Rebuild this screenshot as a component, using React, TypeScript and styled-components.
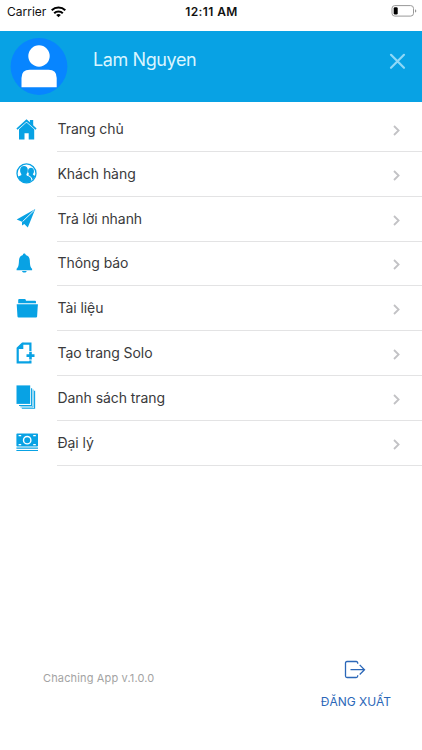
import React from 'react';
import styled, { createGlobalStyle } from 'styled-components';

const BLUE = '#08a2e4';

const GlobalStyle = createGlobalStyle`
  body { margin: 0; background: #fff; font-family: Inter, "Liberation Sans", sans-serif; }
  * { box-sizing: border-box; }
  svg { display: block; flex: none; }
`;

const Screen = styled.div`
  width: 422px;
  height: 750px;
  display: flex;
  flex-direction: column;
  overflow: hidden;
  background: #fff;
`;

const StatusBar = styled.div`
  height: 31px;
  flex: none;
  display: grid;
  grid-template-columns: 1fr auto 1fr;
  padding: 0 6px 8px 7px;
  align-items: center;
  color: #111;
`;

const Carrier = styled.div`
  display: flex;
  align-items: center;
  gap: 5px;
  font-size: 12px;
`;

const Clock = styled.div`
  font-size: 12px;
  font-weight: 600;
  letter-spacing: 0.4px;
`;

const BatterySlot = styled.div`
  display: flex;
  justify-content: flex-end;
  margin: -2px -1px 0 0;
`;

const Header = styled.header`
  height: 71px;
  flex: none;
  display: flex;
  background: ${BLUE};
  padding: 7px 16px 0 10px;
`;

const UserName = styled.h1`
  flex: 1;
  margin: 10px 0 0 25px;
  font-size: 18px;
  font-weight: 400;
  line-height: 24px;
  letter-spacing: -0.4px;
  color: #d9f5ff;
`;

const CloseButton = styled.button`
  border: 0;
  padding: 0;
  margin-top: 15px;
  width: 17px;
  height: 17px;
  background: none;
`;

const Menu = styled.nav`
  display: flex;
  flex-direction: column;
  padding-top: 5.2px;
`;

const MenuRow = styled.a`
  height: 44.8px;
  display: flex;
  align-items: center;
  padding-left: 14px;
`;

const IconSlot = styled.span`
  width: 43px;
  flex: none;
`;

const RowBody = styled.span`
  flex: 1;
  height: 100%;
  display: flex;
  align-items: center;
  justify-content: space-between;
  padding: 0 22px 0 0.5px;
  border-bottom: 1px solid #e3e3e4;
`;

const Label = styled.span`
  font-size: 14px;
  line-height: 20px;
  letter-spacing: -0.06px;
  color: #3a3a3c;
`;

const ChevronSlot = styled.span`
  padding-top: 3px;
`;

const Footer = styled.footer`
  margin-top: auto;
  height: 100px;
  display: flex;
  justify-content: space-between;
  padding: 0 31px 0 43px;
`;

const Version = styled.span`
  padding-top: 20px;
  font-size: 11px;
  line-height: 16px;
  letter-spacing: 0.15px;
  color: #a3a3a3;
`;

const Logout = styled.button`
  border: 0;
  padding: 10px 0 0;
  background: none;
  display: flex;
  flex-direction: column;
  align-items: center;
  gap: 13px;
  font: 400 12px/18px Inter, sans-serif;
  color: #2b67b8;
  white-space: nowrap;
`;

const LogoutIcon = styled.svg`
  margin-right: 2px;
`;

const Icon = ({ children }: { children: React.ReactNode }) => (
  <svg width="24" height="28" viewBox="0 0 24 28" fill={BLUE}>{children}</svg>
);

const HomeIcon = () => (
  <Icon>
    <path d="M2.4 12.6 12.5 3.200l3.400 3.100V4.100h3.300v5.200l3.400 3.300-1.100 1.200-9-8-9 8z" />
    <path d="M5 13.300 12.500 6.400l7.700 6.900v10.200h-5.500v-6.200h-4.200v6.200H5z" />
  </Icon>
);

const CustomersIcon = () => (
  <Icon>
    <circle cx="12.500" cy="13.400" r="9.500" fill="#fff" stroke={BLUE} strokeWidth="1.300" />
    <path d="M3.900 16.800c.8-.9 2.500-.9 3.300-1.500.5-.5.1-1.100-.2-1.700-.7-1.100-1-2.300-.9-3.700.2-2.800 1.700-4 3.900-4s3.700 1.300 3.800 4c.1 1.500-.2 2.700-1 3.700-.4.6-.5 1.400 0 1.800 1 .7 3 .9 3.700 2.200.7 1 .9 2.300.9 3.500a8.900 8.900 0 0 1-13.500-4.300z" />
    <path d="M13.900 15.100c.7-.5 1.300-.7 1.100-1.300-.8-.9-1.100-2.100-.9-3.400.2-1.700 1.400-2.700 2.900-2.700s2.700 1 2.900 2.700c.2 1.400-.1 2.500-.9 3.400-.3.600.1 1.100.8 1.400l1.600.8a9 9 0 0 1-2.900 4c-.1-2.300-2.200-3.900-4.600-4.900z" />
  </Icon>
);

const SendIcon = () => (
  <Icon>
    <path d="M21.300 3.900 2.700 14.400l5.300 2.300v3.700l2.300-1.500 3.500 3.500z" />
    <path d="M20.200 5.300 8.500 16.600" fill="none" stroke="#fff" strokeWidth=".9" />
  </Icon>
);

const BellIcon = () => (
  <Icon>
    <path d="M10.300 3.500c.9 0 1.400.6 1.400 1.400 2.500.6 4 2.600 4.100 5.300.2 5 .6 7.200 2.300 8.600v1.400H2.600v-1.400C4.300 17.400 4.800 15.200 5 10.200c.1-2.700 1.500-4.700 3.900-5.300 0-.8.5-1.400 1.400-1.400zM8 20.900h4.700c-.3 1.100-1.100 1.700-2.300 1.700S8.300 22 8 20.900z" />
  </Icon>
);

const FolderIcon = () => (
  <Icon>
    <path d="M4.200 8.300V5.100q0-1 1-1h5.600q.8 0 1 .9l.2.700h9q1 0 1 1v1.600z" />
    <path d="M2.700 9.200h21.200l-.8 12.300q-.1 1-1.100 1H4.600q-1 0-1.100-1z" />
  </Icon>
);

const NewPageIcon = () => (
  <Icon>
    <path d="M16.400 11V3.600H8.500L3.700 8.200v14.100h12.700v-1.800" fill="none" stroke={BLUE} strokeWidth="2.200" />
    <path d="m2.600 8.900 6.700-6.400v6.400z" />
    <path d="M15.200 11.700h2.600v2.600h2.700v2.600h-2.700v2.600h-2.600v-2.600h-2.700v-2.600h2.700z" />
  </Icon>
);

const PagesIcon = () => (
  <Icon>
    <path d="M2.500 1.400h13.700v18.500H2.500z" />
    <path d="M17.600 4.300v17.200H5M20.600 6.800v17.500H7.800" fill="none" stroke={BLUE} strokeWidth="1.100" />
    <path d="M19.100 5.500v17.400H6.300" fill="none" stroke={BLUE} strokeWidth=".7" />
  </Icon>
);

const MoneyIcon = () => (
  <Icon>
    <path d="M3.200 4.500h20q.8 0 .8.800v11.500q0 .8-.8.800h-20q-.8 0-.8-.8V5.300q0-.8.800-.8zM2.400 18.600H24v1.100H2.400zM2.400 20.900H24v1.200H2.400z" />
    <circle cx="13.200" cy="11.200" r="3.700" fill="none" stroke="#fff" strokeWidth="1.400" />
    <path d="M4.600 6.600h2.600M19.200 6.600h2.600M4.600 15.700h2.600M19.200 15.700h2.600" fill="none" stroke="#fff" strokeWidth="1.300" />
  </Icon>
);

const items = [
  { label: 'Trang chủ', icon: HomeIcon },
  { label: 'Khách hàng', icon: CustomersIcon },
  { label: 'Trả lời nhanh', icon: SendIcon },
  { label: 'Thông báo', icon: BellIcon },
  { label: 'Tài liệu', icon: FolderIcon },
  { label: 'Tạo trang Solo', icon: NewPageIcon },
  { label: 'Danh sách trang', icon: PagesIcon },
  { label: 'Đại lý', icon: MoneyIcon },
];

export default function App() {
  return (
    <Screen>
      <GlobalStyle />
      <StatusBar>
        <Carrier>
          Carrier
          <svg width="15" height="12" viewBox="0 0 15 12" fill="none" stroke="#000" strokeWidth="2.100">
            <path d="M.7 4.300a9.800 9.800 0 0 1 13.600 0M3.200 7.200a6.200 6.200 0 0 1 8.600 0" />
            <path d="M7.500 11.300 5.200 9a3.300 3.300 0 0 1 4.600 0z" fill="#000" stroke="none" />
          </svg>
        </Carrier>
        <Clock>12:11 AM</Clock>
        <BatterySlot>
          <svg width="26" height="12" viewBox="0 0 26 12">
            <rect x="1" y=".6" width="21.500" height="10.500" rx="2.800" fill="none" stroke="#999" />
            <rect x="2.700" y="2.300" width="4" height="7.200" rx="1.200" fill="#000" />
            <path d="M24 4.200q1.300.5 1.300 1.700T24 7.600z" fill="#999" />
          </svg>
        </BatterySlot>
      </StatusBar>
      <Header>
        <svg width="58" height="58" viewBox="0 0 58 58">
          <circle cx="29" cy="28.500" r="28.400" fill="#0785ff" />
          <circle cx="29" cy="18" r="10.700" fill="#fff" />
          <path d="M11.500 49.300V40q0-8.200 8.200-8.200h18.800q8.200 0 8.200 8.200v9.300z" fill="#fff" />
        </svg>
        <UserName>Lam Nguyen</UserName>
        <CloseButton aria-label="Close">
          <svg width="17" height="17" viewBox="0 0 17 17" stroke="#8ed8f7" strokeWidth="2.200" strokeLinecap="round">
            <path d="m2 1.800 13 13M15 1.800l-13 13" />
          </svg>
        </CloseButton>
      </Header>
      <Menu>
        {items.map(({ label, icon: Glyph }) => (
          <MenuRow key={label}>
            <IconSlot><Glyph /></IconSlot>
            <RowBody>
              <Label>{label}</Label>
              <ChevronSlot>
                <svg width="7" height="11" viewBox="0 0 7 11" fill="none" stroke="#c2c2c5" strokeWidth="1.800">
                  <path d="m1 1 4.600 4.500L1 10" />
                </svg>
              </ChevronSlot>
            </RowBody>
          </MenuRow>
        ))}
      </Menu>
      <Footer>
        <Version>Chaching App v.1.0.0</Version>
        <Logout>
          <LogoutIcon width="22" height="20" viewBox="0 0 22 20" fill="none" stroke="#2b67b8" strokeWidth="1.300">
            <path d="M13.700 3.800V3q0-1.500-1.500-1.500H3Q1.500 1.500 1.500 3v13q0 1.500 1.500 1.500h9.200q1.500 0 1.500-1.500v-.8M6.500 9.700h14M15.700 4.900l4.800 4.800-4.800 4.800" />
          </LogoutIcon>
          ĐĂNG XUẤT
        </Logout>
      </Footer>
    </Screen>
  );
}
